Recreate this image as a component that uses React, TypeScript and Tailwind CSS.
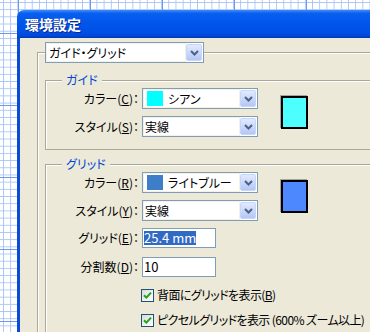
import React from 'react'

const Chevron = () => (
  <svg width="9" height="6" viewBox="0 0 9 6">
    <path d="M1 1l3.5 3.5L8 1" fill="none" stroke="#4d6185" strokeWidth="2" />
  </svg>
)

const Combo = ({ width, children }: any) => (
  <div className={`flex h-[21px] border border-[#7f9db9] bg-white ${width}`}>
    <div className="flex flex-1 items-center border border-[#f5f1e4] pl-[1px]">{children}</div>
    <div className="my-[1px] mr-[1px] flex w-[16px] items-center justify-center rounded-[2px] border border-[#c6d5fb] bg-[linear-gradient(to_bottom,#e2eafe,#b3c7f6)]">
      <Chevron />
    </div>
  </div>
)

const Field = ({ children }: any) => (
  <div className="flex h-[20px] w-[74px] items-center border border-[#7f9db9] bg-white pl-[1px] text-[13px]">
    {children}
  </div>
)

const Label = ({ children }: any) => <div className="w-[77px] text-right whitespace-nowrap">{children}</div>

const Row = ({ label, children, className = '' }: any) => (
  <div className={`flex items-center gap-[3px] ${className}`}>
    <Label>{label}</Label>
    {children}
  </div>
)

const Swatch = ({ color }: any) => (
  <div className={`h-[33px] w-[27px] border-2 border-black shadow-[-1px_-1px_0_#a4a4a4] ${color}`} />
)

const Check = ({ children, className = '' }: any) => (
  <div className={`flex h-[16px] items-center gap-[3px] pl-[79px] ${className}`}>
    <span className="flex h-[13px] w-[13px] shrink-0 items-center justify-center border border-[#1c5180] bg-[linear-gradient(135deg,#dcdcd5,#ffffff)]">
      <svg width="9" height="9" viewBox="0 0 9 9">
        <path d="M1 4.2l2.4 2.4L8 1.6" fill="none" stroke="#21a121" strokeWidth="2" />
      </svg>
    </span>
    <span className="whitespace-nowrap tracking-[-0.6px]">{children}</span>
  </div>
)

const App = () => {
  return (
    <div className="h-[332px] w-[370px] overflow-hidden bg-white bg-[linear-gradient(to_right,#6f98ea_1px,transparent_1px),linear-gradient(to_bottom,#6f98ea_1px,transparent_1px),linear-gradient(to_right,#abc5f6_1px,transparent_1px),linear-gradient(to_bottom,#abc5f6_1px,transparent_1px)] bg-[length:72px_72px,72px_72px,7.2px_7.2px,7.2px_7.2px] bg-[position:18px_33px,18px_33px,3px_2px,3px_2px] pt-[10px] pl-[17px] font-['Noto_Sans_CJK_JP',sans-serif] [font-feature-settings:'palt']">
      <div className="w-[420px]">
        <div className="flex h-[28px] items-center rounded-t-[7px] bg-[linear-gradient(to_bottom,#3d8ff9_0%,#0a5ff0_12%,#0055ea_50%,#0050e4_80%,#0048d8_92%,#0038b8_100%)] pl-[8px] text-[14px] font-bold text-white [text-shadow:1px_1px_#0a2a90]">
          環境設定
        </div>
        <div className="h-[300px] border-l-[3px] border-[#0a4cd8] bg-[#ece9d8] pt-[4px] pl-[17px] text-[12px] leading-[14px] text-black">
          <fieldset className="border border-[#aca899] pl-[7px] shadow-[inset_1px_1px_0_#fff]">
            <legend>
              <Combo width="w-[159px]">
                <span className="pl-[1px]">ガイド・グリッド</span>
              </Combo>
            </legend>

            <fieldset className="mt-[10px] border border-[#aca899] pb-[12px] pl-[16px] shadow-[inset_1px_1px_0_#fff]">
              <legend className="bg-[#ece9d8] px-[4px] text-[#0046d5]">ガイド</legend>
              <div className="flex items-center pt-[1px]">
                <div className="flex flex-col gap-[7px]">
                  <Row label={<>カラー(<u>C</u>)：</>}>
                    <Combo width="w-[116px]">
                      <span className="ml-[2px] h-[15px] w-[16px] bg-[#00ffff]" />
                      <span className="ml-[5px]">シアン</span>
                    </Combo>
                  </Row>
                  <Row label={<>スタイル(<u>S</u>)：</>}>
                    <Combo width="w-[116px]">
                      <span>実線</span>
                    </Combo>
                  </Row>
                </div>
                <div className="ml-[23px]">
                  <Swatch color="bg-[#4dffff]" />
                </div>
              </div>
            </fieldset>

            <fieldset className="mt-[7px] border border-[#aca899] pb-[20px] pl-[16px] shadow-[inset_1px_1px_0_#fff]">
              <legend className="bg-[#ece9d8] px-[4px] text-[#0046d5]">グリッド</legend>
              <div className="flex items-center pt-[1px]">
                <div className="flex flex-col gap-[7px]">
                  <Row label={<>カラー(<u>R</u>)：</>}>
                    <Combo width="w-[116px]">
                      <span className="ml-[2px] h-[15px] w-[16px] bg-[#3e7dc7]" />
                      <span className="ml-[5px]">ライトブルー</span>
                    </Combo>
                  </Row>
                  <Row label={<>スタイル(<u>Y</u>)：</>}>
                    <Combo width="w-[116px]">
                      <span>実線</span>
                    </Combo>
                  </Row>
                </div>
                <div className="ml-[23px]">
                  <Swatch color="bg-[#4d88ff]" />
                </div>
              </div>
              <Row className="mt-[7px]" label={<>グリッド(<u>E</u>)：</>}>
                <Field>
                  <span className="bg-[#316ac5] text-white">25.4 mm</span>
                </Field>
              </Row>
              <Row className="mt-[9px]" label={<>分割数(<u>D</u>)：</>}>
                <Field>10</Field>
              </Row>
              <Check className="mt-[10px]">
                背面にグリッドを表示(<u>B</u>)
              </Check>
              <Check className="mt-[9px]">ピクセルグリッドを表示 (600% ズーム以上)</Check>
            </fieldset>
          </fieldset>
        </div>
      </div>
    </div>
  )
}

export default App
